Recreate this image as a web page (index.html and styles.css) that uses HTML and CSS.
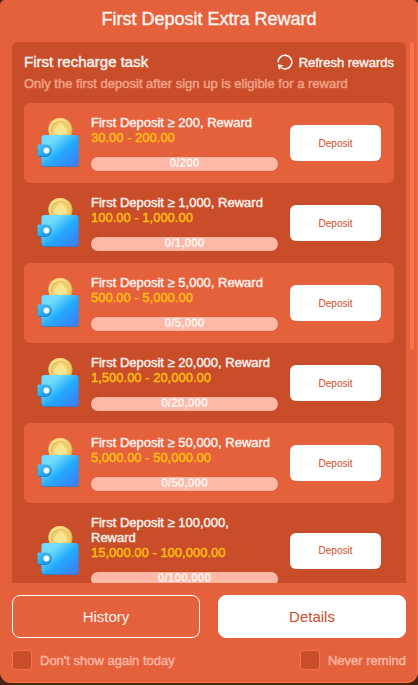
FILE: index.html
```html
<!DOCTYPE html>
<html lang="en">
<head>
<meta charset="utf-8">
<meta name="viewport" content="width=device-width, initial-scale=1">
<title>First Deposit Extra Reward</title>
<link rel="stylesheet" href="styles.css">
</head>
<body>
<svg class="defs" aria-hidden="true">
  <defs>
    <linearGradient id="wallet-fill" x1="0" y1="0" x2="1" y2="1">
      <stop offset="0" stop-color="#6fdcff"/>
      <stop offset="0.25" stop-color="#74dcfd"/>
      <stop offset="0.55" stop-color="#23aafc"/>
      <stop offset="1" stop-color="#3f78ff"/>
    </linearGradient>
    <linearGradient id="clasp-fill" x1="0" y1="0" x2="1" y2="1">
      <stop offset="0" stop-color="#4fc5f5"/>
      <stop offset="1" stop-color="#1b8fdc"/>
    </linearGradient>
    <linearGradient id="coin-fill" x1="0" y1="0" x2="1" y2="1">
      <stop offset="0" stop-color="#fbe795"/>
      <stop offset="1" stop-color="#edbe58"/>
    </linearGradient>
    <symbol id="wallet" viewBox="0 0 42 52">
      <circle cx="24" cy="13" r="12" fill="#dca545"/>
      <circle cx="23.5" cy="12.5" r="11.5" fill="url(#coin-fill)"/>
      <circle cx="23.5" cy="13" r="9" fill="#e7b652"/>
      <circle cx="24" cy="13.5" r="8.5" fill="#f3cf70"/>
      <path d="M24 5.500c1.500 3 6.500 5 6.500 9 0 2-2 3-4 2.500v2h-5v-2c-2 .5-4-.5-4-2.500 0-4 5-6 6.500-9z" fill="#fbe592"/>
      <rect x="5" y="20" width="37" height="30" rx="3" fill="#3f78b4"/>
      <rect x="5" y="18" width="37" height="31" rx="3" fill="url(#wallet-fill)"/>
      <path d="M2 29h8a5 5 0 0 1 5 5 6 6 0 0 1-6 6H2a1 1 0 0 1-1-1V30a1 1 0 0 1 1-1z" fill="#1682c9"/>
      <path d="M2 27.500h8a5 5 0 0 1 5 5.500 6 6 0 0 1-6 6H2a1 1 0 0 1-1-1v-9.500a1 1 0 0 1 1-1z" fill="url(#clasp-fill)"/>
      <circle cx="10" cy="33.500" r="3" fill="#f4fcff"/>
    </symbol>
  </defs>
</svg>
<main class="modal">
  <h1 class="title">First Deposit Extra Reward</h1>
  <div class="scroller">
    <section class="panel">
      <header class="panel-head">
        <h2 class="panel-title">First recharge task</h2>
        <button class="refresh" type="button">
          <svg class="refresh-icon" viewBox="0 0 16 16" fill="none" aria-hidden="true">
            <path d="M1.200 8.200A6.800 6.800 0 1 1 4.500 13.900" stroke="#fff" stroke-width="1.600"/>
            <path d="M.6 10.300l5.600 1-4.200 4.400z" fill="#fff"/>
          </svg>
          Refresh rewards
        </button>
      </header>
      <p class="panel-note">Only the first deposit after sign up is eligible for a reward</p>
      <ul class="tasks">
        <li class="task">
          <svg class="wallet"><use href="#wallet"/></svg>
          <div class="info"><p class="name">First Deposit ≥ 200, Reward</p><p class="range">30.00 - 200.00</p><div class="bar">0/200</div></div>
          <button class="deposit" type="button">Deposit</button>
        </li>
        <li class="task">
          <svg class="wallet"><use href="#wallet"/></svg>
          <div class="info"><p class="name">First Deposit ≥ 1,000, Reward</p><p class="range">100.00 - 1,000.00</p><div class="bar">0/1,000</div></div>
          <button class="deposit" type="button">Deposit</button>
        </li>
        <li class="task">
          <svg class="wallet"><use href="#wallet"/></svg>
          <div class="info"><p class="name">First Deposit ≥ 5,000, Reward</p><p class="range">500.00 - 5,000.00</p><div class="bar">0/5,000</div></div>
          <button class="deposit" type="button">Deposit</button>
        </li>
        <li class="task">
          <svg class="wallet"><use href="#wallet"/></svg>
          <div class="info"><p class="name">First Deposit ≥ 20,000, Reward</p><p class="range">1,500.00 - 20,000.00</p><div class="bar">0/20,000</div></div>
          <button class="deposit" type="button">Deposit</button>
        </li>
        <li class="task">
          <svg class="wallet"><use href="#wallet"/></svg>
          <div class="info"><p class="name">First Deposit ≥ 50,000, Reward</p><p class="range">5,000.00 - 50,000.00</p><div class="bar">0/50,000</div></div>
          <button class="deposit" type="button">Deposit</button>
        </li>
        <li class="task">
          <svg class="wallet"><use href="#wallet"/></svg>
          <div class="info"><p class="name">First Deposit ≥ 100,000, Reward</p><p class="range">15,000.00 - 100,000.00</p><div class="bar">0/100,000</div></div>
          <button class="deposit" type="button">Deposit</button>
        </li>
      </ul>
    </section>
    <div class="rail"><div class="thumb"></div></div>
  </div>
  <div class="actions">
    <button class="action" type="button">History</button>
    <button class="action action-solid" type="button">Details</button>
  </div>
  <div class="options">
    <label class="option"><input class="check" type="checkbox">Don't show again today</label>
    <label class="option"><input class="check" type="checkbox">Never remind</label>
  </div>
</main>
</body>
</html>
```
FILE: styles.css
```css
* {
  box-sizing: border-box;
  margin: 0;
  padding: 0;
}

body {
  display: flex;
  flex-direction: column;
  height: 100vh;
  padding-bottom: 2px;
  background: #4a2412;
  font: 13px/15px "Liberation Sans", Arial, sans-serif;
  color: #fff4f0;
}

button {
  border: 0;
  background: none;
  color: inherit;
  font: inherit;
  cursor: pointer;
}

.defs {
  position: absolute;
  width: 0;
  height: 0;
}

.modal {
  display: flex;
  flex: 1;
  flex-direction: column;
  min-height: 0;
  padding: 0 11px 12px 12px;
  border-right: 1px solid #f7714a;
  border-bottom: 1px solid #f7714a;
  border-radius: 5px 5px 11px 11px;
  background: #e5613c;
}

.title {
  padding: 8px 0 12px;
  font-size: 18px;
  font-weight: 400;
  line-height: 22px;
  text-align: center;
}

.scroller {
  display: flex;
  flex: 1;
  gap: 4px;
  min-height: 0;
  margin-right: -8px;
  overflow: hidden;
}

.panel {
  flex: 1;
  align-self: flex-start;
  padding: 12px;
  border-radius: 6px;
  background: #ca4d29;
}

.rail {
  width: 4px;
}

.thumb {
  height: 57%;
  border-radius: 2px;
  background: #fd724b;
}

.panel-head {
  display: flex;
  align-items: center;
  justify-content: space-between;
  height: 16px;
}

.panel-title {
  font-size: 15px;
  font-weight: 400;
  line-height: 16px;
}

.refresh {
  display: flex;
  align-items: center;
  gap: 6px;
}

.refresh-icon {
  width: 16px;
  height: 16px;
}

.panel-note {
  margin: 6px 0 12px;
  color: #f5a58c;
}

.title,
.panel-title,
.refresh,
.panel-note,
.name,
.range,
.option {
  -webkit-text-stroke: 0.4px;
}

.tasks {
  list-style: none;
}

.task {
  display: flex;
  align-items: center;
  gap: 12px;
  min-height: 80px;
  padding: 12px 13px 12px 12px;
  border-radius: 6px;
}

.task:nth-child(odd) {
  background: #e5613c;
}

.wallet {
  width: 43px;
  height: 52px;
}

.info {
  flex: 1;
}

.name {
  padding-right: 4px;
}

.range {
  color: #ffc011;
}

.bar {
  height: 14px;
  margin-top: 12px;
  border-radius: 7px;
  background: #ffb8a6;
  font-size: 12px;
  font-weight: 700;
  line-height: 13px;
  text-align: center;
}

.deposit {
  width: 91px;
  height: 36px;
  border-radius: 6px;
  background: #fff;
  color: #ca4d29;
  font-size: 10px;
}

.actions {
  display: grid;
  grid-template-columns: 1fr 1fr;
  gap: 18px;
  margin-top: 12px;
}

.action {
  height: 43px;
  border: 1px solid #fff;
  border-radius: 8px;
  font-size: 15px;
}

.action-solid {
  background: #fff;
  color: #ca4d29;
}

.options {
  display: flex;
  justify-content: space-between;
  margin-top: 12px;
}

.option {
  display: flex;
  align-items: center;
  gap: 8px;
  color: #ffb8a6;
}

.check {
  width: 20px;
  height: 20px;
  border: 1px solid #f7714a;
  border-radius: 3px;
  background: #ca4d29;
  appearance: none;
}
```
